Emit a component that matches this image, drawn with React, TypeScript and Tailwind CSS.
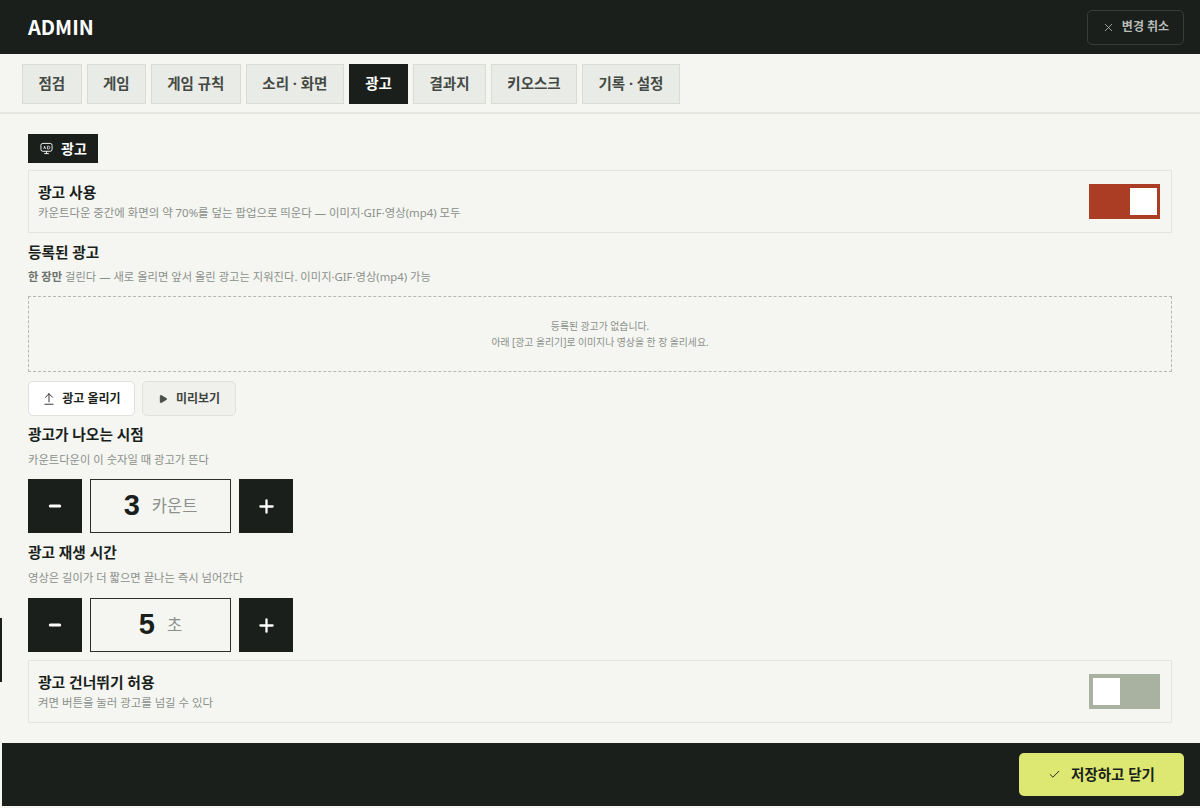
import { X, Check, ArrowUpFromLine, Play, Plus, Minus } from 'lucide-react';

const tabs = [
  { label: '점검', w: 'w-[59.5px]' },
  { label: '게임', w: 'w-[59.5px]' },
  { label: '게임 규칙', w: 'w-[89.7px]' },
  { label: '소리 · 화면', w: 'w-[98.3px]' },
  { label: '광고', w: 'w-[59px]', active: true },
  { label: '결과지', w: 'w-[73px]' },
  { label: '키오스크', w: 'w-[86px]' },
  { label: '기록 · 설정', w: 'w-[98px]' },
];

function ToggleRow({ title, desc, on }: { title: string; desc: string; on: boolean }) {
  return (
    <div className="flex h-[63px] items-center justify-between border border-[#e3e5df] pl-[9px] pr-[11px]">
      <div>
        <div className="text-[14.8px] font-bold leading-[20px] text-[#1a1f1c]">{title}</div>
        <div className="mt-[2px] text-[11.4px] leading-[17px] text-[#8b908a]">{desc}</div>
      </div>
      <div className={`flex h-[35px] w-[71px] items-center px-[3.5px] ${on ? 'justify-end bg-[#ab3d24]' : 'justify-start bg-[#a9b1a0]'}`}>
        <div className="h-[27px] w-[27px] bg-white" />
      </div>
    </div>
  );
}

function Stepper({ value, unit }: { value: string; unit: string }) {
  return (
    <div className="flex gap-[8px]">
      <button className="flex h-[54px] w-[54px] items-center justify-center bg-[#1a1f1c] text-white">
        <Minus className="h-[16px] w-[16px]" strokeWidth={4.5} />
      </button>
      <div className="flex h-[54px] w-[141px] items-center justify-center gap-[12px] border border-[#2a2f2c]">
        <span className="font-['Liberation_Sans',sans-serif] text-[29px] font-bold text-[#1a1f1c]">{value}</span>
        <span className="text-[16.5px] text-[#8b908a]">{unit}</span>
      </div>
      <button className="flex h-[54px] w-[54px] items-center justify-center bg-[#1a1f1c] text-white">
        <Plus className="h-[21px] w-[21px]" strokeWidth={2.6} />
      </button>
    </div>
  );
}

export default function App() {
  return (
    <div className="relative flex h-[808px] w-[1200px] flex-col overflow-hidden bg-[#f5f6f2] font-['Noto_Sans','Noto_Sans_CJK_KR',sans-serif]">
      {/* Header */}
      <header className="flex h-[54px] shrink-0 items-center justify-between bg-[#1a1f1c] pl-[28px] pr-[16px]">
        <div className="font-['Noto_Sans_CJK_KR',sans-serif] text-[20px] font-bold text-white">ADMIN</div>
        <button className="flex h-[35px] w-[97px] items-center justify-center gap-[7px] rounded-[5px] border border-[#373c38] text-[12px] font-bold text-[#b9bdb7]">
          <X className="h-[13px] w-[13px]" strokeWidth={1.5} />
          변경 취소
        </button>
      </header>

      {/* Tabs */}
      <nav className="flex h-[60px] shrink-0 gap-[5px] border-b-2 border-[#e4e6e0] pl-[22px] pt-[10px]">
        {tabs.map((t) => (
          <div
            key={t.label}
            className={`flex h-[40px] items-center justify-center border text-[14.5px] font-bold ${t.w} ${
              t.active ? 'border-[#1a1f1c] bg-[#1a1f1c] text-white' : 'border-[#d9dcd5] bg-[#e9ebe6] text-[#444944]'
            }`}
          >
            {t.label}
          </div>
        ))}
      </nav>

      {/* Content */}
      <main className="flex-1 px-[28px] pt-[20px]">
        <div className="flex h-[29px] w-[70px] items-center gap-[8px] bg-[#1a1f1c] pl-[12px] text-[14px] font-bold text-white">
          <svg viewBox="0 0 14 14" className="h-[13px] w-[13px]" fill="none" stroke="currentColor" strokeWidth="1">
            <rect x="1" y="1.5" width="12" height="8.5" rx="2" />
            <path d="M7 10v2.5M4.5 12.5h5" />
            <path d="M4 7.5l1-3 1 3M8 4.5v3h1a1.5 1.5 0 000-3z" strokeWidth="0.8" />
          </svg>
          광고
        </div>

        <div className="mt-[7px]">
          <ToggleRow title="광고 사용" desc="카운트다운 중간에 화면의 약 70%를 덮는 팝업으로 띄운다 — 이미지·GIF·영상(mp4) 모두" on />
        </div>

        <h3 className="mt-[8px] text-[14.7px] font-bold leading-[22px] text-[#1a1f1c]">등록된 광고</h3>
        <p className="mt-[5px] text-[11.3px] leading-[17px] text-[#8b908a]">
          <b className="font-bold text-[#6d726c]">한 장만</b> 걸린다 — 새로 올리면 앞서 올린 광고는 지워진다. 이미지·GIF·영상(mp4) 가능
        </p>

        <div className="mt-[11px] flex h-[76px] flex-col items-center justify-center border border-dashed border-[#b5b9b1] text-[9.85px] leading-[16px] text-[#8b908a]">
          <div>등록된 광고가 없습니다.</div>
          <div>아래 [광고 올리기]로 이미지나 영상을 한 장 올리세요.</div>
        </div>

        <div className="mt-[9px] flex gap-[7px]">
          <button className="flex h-[35px] w-[107px] items-center justify-center gap-[6px] rounded-[5px] border border-[#dfe1db] bg-white text-[12px] font-bold text-[#1a1f1c]">
            <ArrowUpFromLine className="h-[14px] w-[14px]" strokeWidth={1.5} />
            광고 올리기
          </button>
          <button className="flex h-[35px] w-[94px] items-center justify-center gap-[8px] rounded-[5px] border border-[#dfe1db] bg-[#f0f1ed] text-[12px] font-bold text-[#3f443f]">
            <Play className="h-[10px] w-[10px] fill-[#4a4f4a] text-[#4a4f4a]" strokeWidth={1} />
            미리보기
          </button>
        </div>

        <h3 className="mt-[7px] text-[14.7px] font-bold leading-[22px] text-[#1a1f1c]">광고가 나오는 시점</h3>
        <p className="mt-[6px] text-[11.3px] leading-[17px] text-[#8b908a]">카운트다운이 이 숫자일 때 광고가 뜬다</p>
        <div className="mt-[11px]">
          <Stepper value="3" unit="카운트" />
        </div>

        <h3 className="mt-[8px] text-[14.7px] font-bold leading-[22px] text-[#1a1f1c]">광고 재생 시간</h3>
        <p className="mt-[6px] text-[11.3px] leading-[17px] text-[#8b908a]">영상은 길이가 더 짧으면 끝나는 즉시 넘어간다</p>
        <div className="mt-[12px]">
          <Stepper value="5" unit="초" />
        </div>

        <div className="mt-[8px]">
          <ToggleRow title="광고 건너뛰기 허용" desc="켜면 버튼을 눌러 광고를 넘길 수 있다" on={false} />
        </div>
      </main>

      {/* Footer */}
      <footer className="mb-[2px] ml-[2px] flex h-[63px] shrink-0 items-center justify-end bg-[#1a1f1c] pr-[16px]">
        <button className="flex h-[43px] w-[165px] items-center justify-center gap-[10px] rounded-[5px] bg-[#dde872] text-[14.5px] font-bold text-[#1a1f1c]">
          <Check className="h-[13px] w-[13px]" strokeWidth={1.75} />
          저장하고 닫기
        </button>
      </footer>

      {/* left edge marker */}
      <div className="absolute left-0 top-[618px] h-[64px] w-[2px] bg-[#1a1f1c]" />
    </div>
  );
}
